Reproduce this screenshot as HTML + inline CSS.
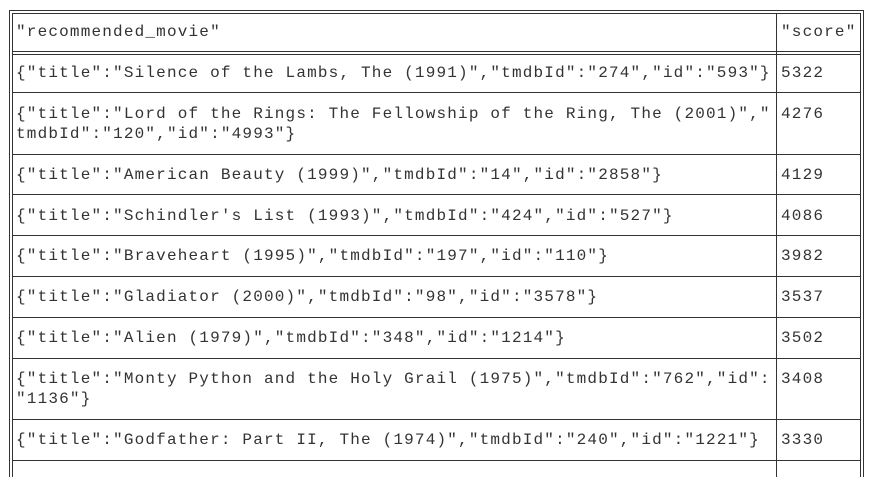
<!DOCTYPE html>
<html><head><style>
body{margin:0;width:869px;height:477px;background:#fff;position:relative;overflow:hidden;font-family:"Liberation Mono","Courier New",monospace;font-size:16px;letter-spacing:1.18px;color:#333}
.h{position:absolute;height:1px;background:#333}
.v{position:absolute;width:1px;background:#333}
.t{position:absolute;white-space:pre;line-height:20px}
</style></head><body>
<div class="h" style="left:9px;width:855px;top:10px"></div>
<div class="h" style="left:12px;width:849px;top:13px"></div>
<div class="h" style="left:12px;width:849px;top:51px"></div>
<div class="h" style="left:12px;width:849px;top:54px"></div>
<div class="h" style="left:12px;width:849px;top:92px"></div>
<div class="h" style="left:12px;width:849px;top:154px"></div>
<div class="h" style="left:12px;width:849px;top:194px"></div>
<div class="h" style="left:12px;width:849px;top:235px"></div>
<div class="h" style="left:12px;width:849px;top:276px"></div>
<div class="h" style="left:12px;width:849px;top:317px"></div>
<div class="h" style="left:12px;width:849px;top:358px"></div>
<div class="h" style="left:12px;width:849px;top:419px"></div>
<div class="h" style="left:12px;width:849px;top:460px"></div>
<div class="v" style="left:9px;top:10px;height:467px"></div>
<div class="v" style="left:12px;top:13px;height:464px"></div>
<div class="v" style="left:776px;top:13px;height:464px"></div>
<div class="v" style="left:860px;top:13px;height:464px"></div>
<div class="v" style="left:863px;top:10px;height:467px"></div>

<div class="t" style="left:16px;top:22px">"recommended_movie"</div>
<div class="t" style="left:781px;top:22px">"score"</div>

<div class="t" style="left:16px;top:63px">{"title":"Silence of the Lambs, The (1991)","tmdbId":"274","id":"593"}</div>
<div class="t" style="left:781px;top:63px">5322</div>
<div class="t" style="left:16px;top:104px">{"title":"Lord of the Rings: The Fellowship of the Ring, The (2001)","
tmdbId":"120","id":"4993"}</div>
<div class="t" style="left:781px;top:104px">4276</div>
<div class="t" style="left:16px;top:165px">{"title":"American Beauty (1999)","tmdbId":"14","id":"2858"}</div>
<div class="t" style="left:781px;top:165px">4129</div>
<div class="t" style="left:16px;top:206px">{"title":"Schindler's List (1993)","tmdbId":"424","id":"527"}</div>
<div class="t" style="left:781px;top:206px">4086</div>
<div class="t" style="left:16px;top:246px">{"title":"Braveheart (1995)","tmdbId":"197","id":"110"}</div>
<div class="t" style="left:781px;top:246px">3982</div>
<div class="t" style="left:16px;top:287px">{"title":"Gladiator (2000)","tmdbId":"98","id":"3578"}</div>
<div class="t" style="left:781px;top:287px">3537</div>
<div class="t" style="left:16px;top:328px">{"title":"Alien (1979)","tmdbId":"348","id":"1214"}</div>
<div class="t" style="left:781px;top:328px">3502</div>
<div class="t" style="left:16px;top:369px">{"title":"Monty Python and the Holy Grail (1975)","tmdbId":"762","id":
"1136"}</div>
<div class="t" style="left:781px;top:369px">3408</div>
<div class="t" style="left:16px;top:430px">{"title":"Godfather: Part II, The (1974)","tmdbId":"240","id":"1221"}</div>
<div class="t" style="left:781px;top:430px">3330</div>
</body></html>
